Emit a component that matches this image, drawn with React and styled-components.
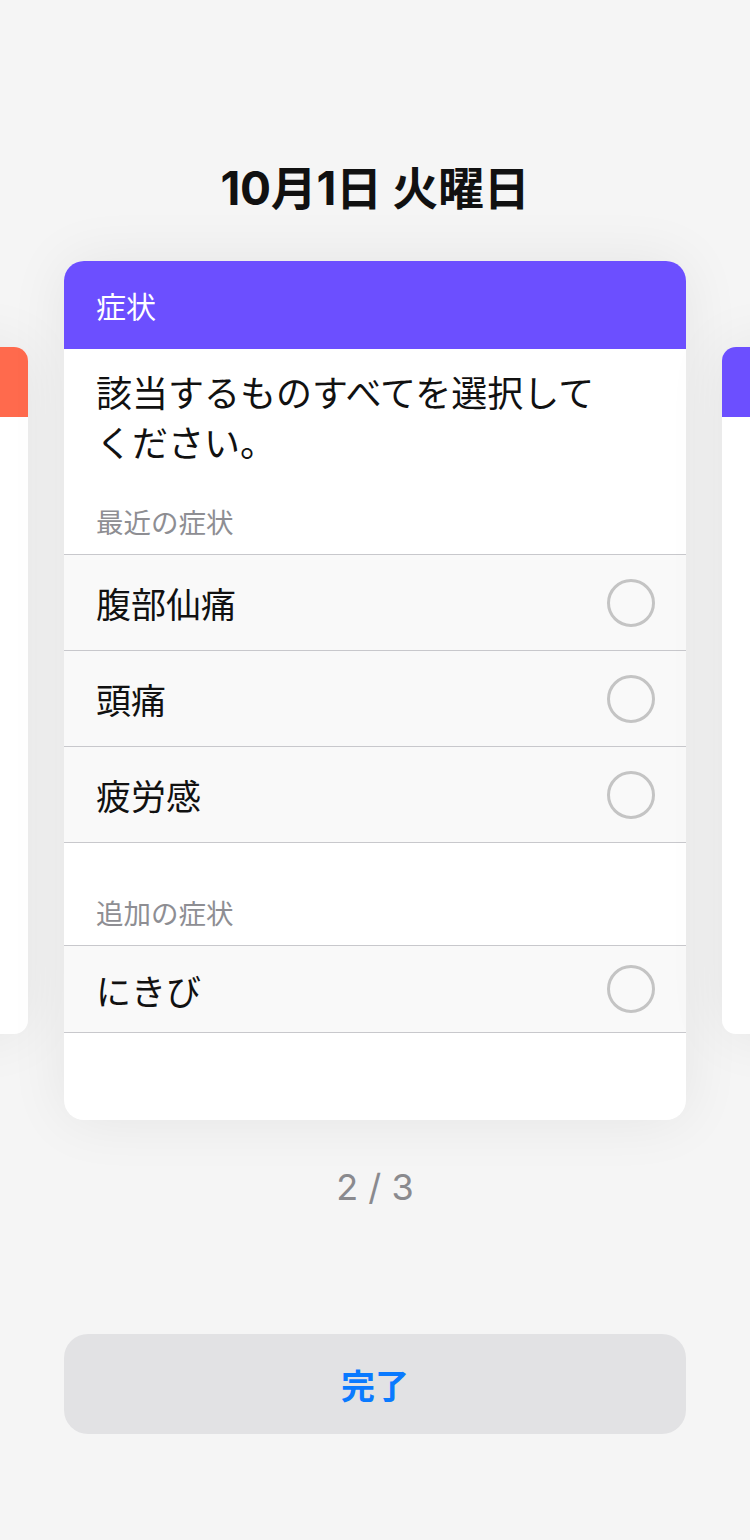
import React from "react";
import styled, { createGlobalStyle } from "styled-components";

const GlobalStyle = createGlobalStyle`
  html, body {
    margin: 0;
    padding: 0;
    background-color: #f5f5f5;
  }
  body {
    font-family: Inter, "Noto Sans CJK JP", sans-serif;
    -webkit-font-smoothing: antialiased;
  }
`;

const Screen = styled.div`
  width: 750px;
  min-height: 1540px;
  display: flex;
  flex-direction: column;
  align-items: center;
  overflow: hidden;
`;

const DateTitle = styled.h1`
  margin: 160px 0 0;
  font-size: 46px;
  line-height: 56px;
  font-weight: 700;
  color: #111;
  letter-spacing: -0.3px;
`;

const Carousel = styled.div`
  width: 750px;
  display: flex;
  justify-content: center;
  align-items: center;
  gap: 36px;
  margin-top: 45px;
`;

const Card = styled.section`
  flex-shrink: 0;
  width: 622px;
  height: ${p => (p.$side ? 687 : 859)}px;
  background-color: #fff;
  border-radius: ${p => (p.$side ? 14 : 20)}px;
  overflow: hidden;
  display: flex;
  flex-direction: column;
  box-shadow: 0 0 60px rgba(0, 0, 0, 0.07);
`;

const CardHeader = styled.header`
  height: ${p => (p.$side ? 70 : 88)}px;
  flex-shrink: 0;
  background-color: ${p => p.$color};
  display: flex;
  align-items: center;
  padding: 0 32px;
  color: #fff;
  font-size: 30px;
  font-family: "Noto Sans CJK JP", sans-serif;
`;

const Instruction = styled.p`
  margin: 0;
  padding: 17px 32px 0;
  max-width: 520px;
  font-family: "Noto Sans CJK JP", sans-serif;
  font-size: 36px;
  line-height: 50px;
  color: #111;
`;

const SectionLabel = styled.div`
  padding: ${p => (p.$top ? 50 : 36)}px 32px 14px;
  font-family: "Noto Sans CJK JP", sans-serif;
  font-size: 27.5px;
  line-height: 38px;
  color: #8e8e93;
  border-bottom: 1px solid #c8c8cc;
`;

const Row = styled.div`
  height: ${p => p.$height}px;
  display: flex;
  align-items: center;
  justify-content: space-between;
  padding: 0 31px 0 32px;
  background-color: #f9f9f9;
  border-bottom: 1px solid #c8c8cc;
  font-family: "Noto Sans CJK JP", sans-serif;
  font-size: 35px;
  color: #111;
`;

const Radio = styled.span`
  width: 42px;
  height: 42px;
  border-radius: 50%;
  border: 3px solid #c4c4c4;
`;

const Pager = styled.div`
  margin-top: 45px;
  font-size: 36px;
  line-height: 44px;
  color: #8a8a8e;
  font-family: Inter, sans-serif;
`;

const DoneButton = styled.button`
  margin-top: 125px;
  width: 622px;
  height: 100px;
  border: none;
  border-radius: 24px;
  background-color: #e2e2e4;
  color: #0a7aff;
  font-family: "Noto Sans CJK JP", sans-serif;
  font-size: 34px;
  font-weight: 700;
`;

const recent = ["腹部仙痛", "頭痛", "疲労感"];

export default function App() {
  return (
    <Screen>
      <GlobalStyle />
      <DateTitle>10月1日 火曜日</DateTitle>
      <Carousel>
        <Card $side>
          <CardHeader $side $color="#ff6a4d" />
        </Card>
        <Card>
          <CardHeader $color="#6c4fff">症状</CardHeader>
          <Instruction>該当するものすべてを選択してください。</Instruction>
          <SectionLabel>最近の症状</SectionLabel>
          {recent.map(label => (
            <Row key={label} $height={95}>
              {label}
              <Radio />
            </Row>
          ))}
          <SectionLabel $top>追加の症状</SectionLabel>
          <Row $height={86}>
            にきび
            <Radio />
          </Row>
        </Card>
        <Card $side>
          <CardHeader $side $color="#6c4fff" />
        </Card>
      </Carousel>
      <Pager>2 / 3</Pager>
      <DoneButton>完了</DoneButton>
    </Screen>
  );
}
